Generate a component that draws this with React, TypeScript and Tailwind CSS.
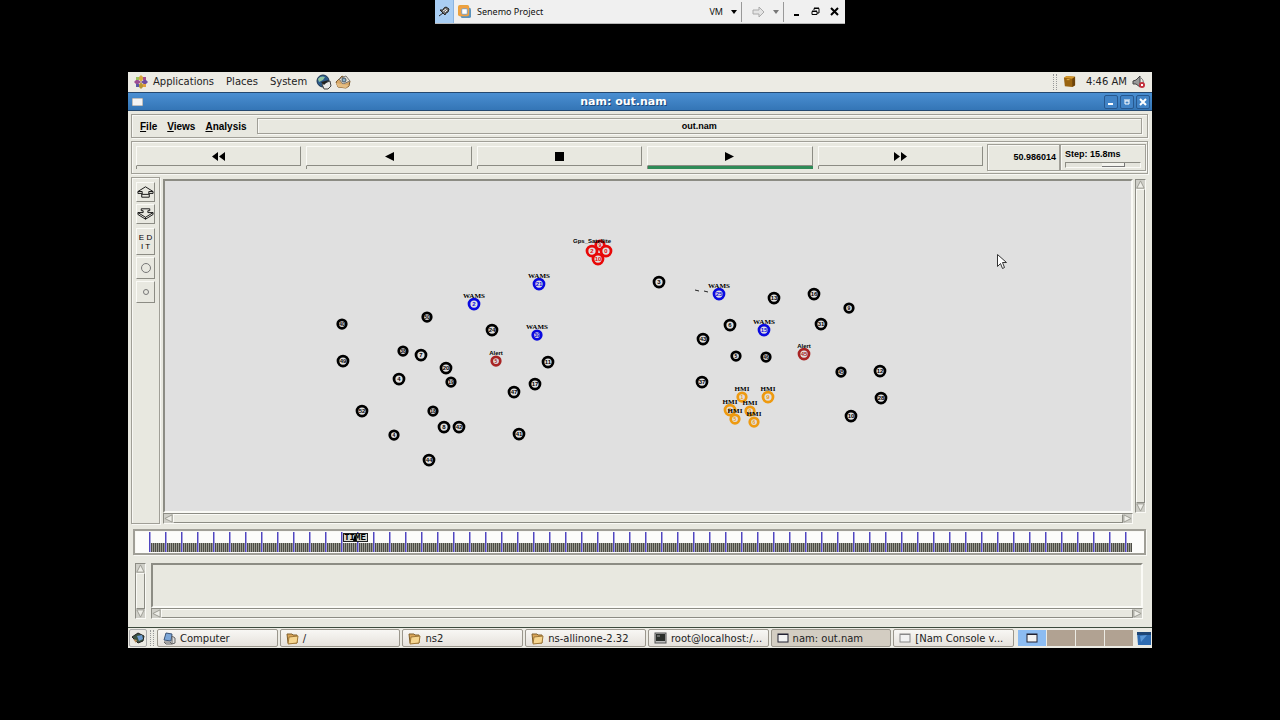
import type { ReactNode } from "react"
import { clsx } from "clsx"

// etched Tk frame and raised / sunken reliefs
const groove = "border border-[#a09f97] shadow-[inset_1px_1px_0_#f8f8f4,1px_1px_0_#f8f8f4]"
const raised = "border border-t-[#fafaf6] border-l-[#fafaf6] border-r-[#8c8c84] border-b-[#8c8c84]"
const sunken = "border border-t-[#8c8c84] border-l-[#8c8c84] border-r-[#fafaf6] border-b-[#fafaf6]"

type Kind = "router" | "wams" | "alert" | "hmi" | "sat"

interface NetNode {
  x: number
  y: number
  id: string
  kind?: Kind
  label?: string
  small?: boolean
}

const colors: Record<Kind, string> = {
  router: "#000000",
  wams: "#0a0ae0",
  alert: "#a82424",
  hmi: "#ee9a10",
  sat: "#e80808",
}

const nodes: NetNode[] = [
  { x: 342, y: 324, id: "40", small: true },
  { x: 427, y: 317, id: "50", small: true },
  { x: 492, y: 330, id: "24" },
  { x: 403, y: 351, id: "38", small: true },
  { x: 421, y: 355, id: "7" },
  { x: 343, y: 361, id: "49" },
  { x: 446, y: 368, id: "20" },
  { x: 399, y: 379, id: "4" },
  { x: 451, y: 382, id: "19", small: true },
  { x: 548, y: 362, id: "11" },
  { x: 535, y: 384, id: "17" },
  { x: 514, y: 392, id: "47" },
  { x: 362, y: 411, id: "52" },
  { x: 433, y: 411, id: "18", small: true },
  { x: 444, y: 427, id: "8" },
  { x: 459, y: 427, id: "42" },
  { x: 394, y: 435, id: "4", small: true },
  { x: 519, y: 434, id: "41" },
  { x: 429, y: 460, id: "44" },
  { x: 659, y: 282, id: "3" },
  { x: 774, y: 298, id: "13" },
  { x: 814, y: 294, id: "16" },
  { x: 849, y: 308, id: "9", small: true },
  { x: 821, y: 324, id: "31" },
  { x: 730, y: 325, id: "6" },
  { x: 703, y: 339, id: "43" },
  { x: 736, y: 356, id: "5", small: true },
  { x: 766, y: 357, id: "46", small: true },
  { x: 841, y: 372, id: "45", small: true },
  { x: 880, y: 371, id: "12" },
  { x: 702, y: 382, id: "37" },
  { x: 881, y: 398, id: "28" },
  { x: 851, y: 416, id: "10" },
  { x: 539, y: 284, id: "21", kind: "wams", label: "WAMS" },
  { x: 474, y: 304, id: "2", kind: "wams", label: "WAMS" },
  { x: 537, y: 335, id: "39", kind: "wams", label: "WAMS", small: true },
  { x: 719, y: 294, id: "25", kind: "wams", label: "WAMS" },
  { x: 764, y: 330, id: "15", kind: "wams", label: "WAMS" },
  { x: 496, y: 361, id: "5", kind: "alert", label: "Alert", small: true },
  { x: 804, y: 354, id: "45", kind: "alert", label: "Alert" },
  { x: 742, y: 397, id: "1", kind: "hmi", label: "HMI", small: true },
  { x: 768, y: 397, id: "9", kind: "hmi", label: "HMI" },
  { x: 730, y: 410, id: "3", kind: "hmi", label: "HMI" },
  { x: 750, y: 411, id: "0", kind: "hmi", label: "HMI", small: true },
  { x: 735, y: 419, id: "5", kind: "hmi", label: "HMI", small: true },
  { x: 754, y: 422, id: "6", kind: "hmi", label: "HMI", small: true },
  { x: 600, y: 245, id: "9", kind: "sat", small: true },
  { x: 592, y: 251, id: "2", kind: "sat" },
  { x: 606, y: 251, id: "0", kind: "sat" },
  { x: 598, y: 259, id: "10", kind: "sat" },
]

function Node({ x, y, id, kind = "router", label, small }: NetNode) {
  const color = colors[kind]
  return (
    <g>
      <circle cx={x} cy={y} r={small ? 4.25 : 5} fill="#e0e0e0" stroke={color} strokeWidth={2.75} />
      <text
        x={x}
        y={y + 2}
        textAnchor="middle"
        fill={color}
        className={clsx("font-bold", small ? "text-[5px]" : "text-[6px]")}
      >
        {id}
      </text>
      {label && (
        <text
          x={x}
          y={y - 6}
          textAnchor="middle"
          className={clsx(
            "font-bold",
            label === "Alert" ? "text-[6px]" : "font-['Liberation_Serif',serif] text-[7px]"
          )}
        >
          {label}
        </text>
      )}
    </g>
  )
}

function Topology() {
  return (
    <svg className="block h-full w-full font-['Liberation_Sans',sans-serif]">
      <g transform="translate(-165 -181)">
        {nodes.map((n) => (
          <Node key={`${n.x}-${n.y}`} {...n} />
        ))}
        <text x="592" y="243" textAnchor="middle" className="text-[6px] font-bold">
          Gps_Satellite
        </text>
        <path d="M695 290l4 1M704 291l4 1" stroke="#222" />
        <path d="M997.500 254.500v12l3-3 2 5 2-1-2-5h4z" fill="#fff" stroke="#333" />
      </g>
    </svg>
  )
}

function Arrow({ dir }: { dir: "up" | "down" | "left" | "right" }) {
  const points = { up: "5,1 9,9 1,9", down: "1,1 9,1 5,9", left: "1,5 9,1 9,9", right: "1,1 9,5 1,9" }
  return (
    <svg viewBox="0 0 10 10" className="size-[9px] shrink-0 bg-[#cfcfc8]">
      <polygon points={points[dir]} fill="#eeeee8" stroke="#97978f" />
    </svg>
  )
}

function ScrollBar({ vertical }: { vertical?: boolean }) {
  return (
    <div
      className={clsx(
        "flex shrink-0 items-center bg-[#d8d8d0]",
        sunken,
        vertical ? "w-[11px] flex-col" : "h-[11px]"
      )}
    >
      <Arrow dir={vertical ? "up" : "left"} />
      <div className={clsx("flex-1 bg-[#e8e8e0]", raised, vertical ? "w-full" : "h-full")} />
      <Arrow dir={vertical ? "down" : "right"} />
    </div>
  )
}

function HostBar() {
  return (
    <header className="flex h-6 w-[410px] items-center border-b border-[#b8b8b8] bg-[#f0f0f0] font-['Noto_Sans',sans-serif] text-[9px] text-[#111]">
      <button aria-label="Pin" className="flex h-full w-[19px] items-center justify-center border-r border-[#8bb4e0] bg-[#a9cef4]">
        <svg viewBox="0 0 12 12" className="size-3">
          <path d="M1 10l4-3" stroke="#222" />
          <path d="M2 4l5 5 1-2 2-1 1-3-3-2-2 1-1 2z" fill="#777" stroke="#222" />
          <path d="M5 5l3-2M7 6l2-2" stroke="#eee" />
        </svg>
      </button>
      <svg viewBox="0 0 14 14" className="ml-1 size-[13px]">
        <rect x="0" y="0" width="12" height="12" rx="2" fill="#e9a33b" />
        <rect x="3" y="3" width="11" height="11" rx="2" fill="#5b93bd" />
        <rect x="1" y="1" width="11" height="11" rx="2" fill="#f0a040" />
        <rect x="4" y="4" width="6" height="6" rx="1" fill="#fff" stroke="#7a9cb8" />
      </svg>
      <span className="ml-1.5 flex-1">Senemo Project</span>
      <button className="flex items-center gap-2 pr-1">
        VM
        <svg viewBox="0 0 6 4" className="h-1 w-1.5">
          <path d="M0 0h6L3 4z" />
        </svg>
      </button>
      <button aria-label="Send keys" className="flex h-5 items-center gap-2 border-x border-[#999] pr-1 pl-2.5">
        <svg viewBox="0 0 13 12" className="h-3 w-[13px]">
          <path d="M1 4h6V1l5 5-5 5V8H1z" fill="#e4e4e4" stroke="#aaa" />
        </svg>
        <svg viewBox="0 0 6 4" className="h-1 w-1.5" fill="#777">
          <path d="M0 0h6L3 4z" />
        </svg>
      </button>
      <div className="flex items-center gap-2.5 pr-1.5 pl-2">
        <button aria-label="Minimize">
          <svg viewBox="0 0 9 9" className="size-[9px]">
            <path d="M2 7h5v2H2z" />
          </svg>
        </button>
        <button aria-label="Restore">
          <svg viewBox="0 0 9 9" className="size-[9px]" fill="none" stroke="#000">
            <path d="M3 3V1.500h5V6H6M3 1h5" />
            <path d="M1 4.500h5v3H1zM1 4h5" />
          </svg>
        </button>
        <button aria-label="Close">
          <svg viewBox="0 0 9 9" className="size-[9px]" stroke="#000" strokeWidth="2">
            <path d="M1 1l7 7M8 1L1 8" />
          </svg>
        </button>
      </div>
    </header>
  )
}

function GnomePanel() {
  return (
    <nav className="flex h-5 shrink-0 items-center bg-[#ecebe4] px-1.5 pb-px text-[10px] text-[#222]">
      <svg viewBox="0 0 14 14" className="size-[14px]">
        <path d="M7 0l3 3-3 4-3-4z" fill="#d8a83a" />
        <path d="M14 7l-3 3-4-3 4-3z" fill="#6d4a9e" />
        <path d="M7 14l-3-3 3-4 3 4z" fill="#b99632" />
        <path d="M0 7l3-3 4 3-4 3z" fill="#9a4c94" />
        <path d="M2 2h3v3H2z" fill="#9bc05c" />
        <path d="M9 2h3v3H9z" fill="#a34d90" />
        <path d="M2 9h3v3H2z" fill="#5a58a6" />
        <path d="M9 9h3v3H9z" fill="#e0a040" />
      </svg>
      <button className="ml-[5px]">Applications</button>
      <button className="ml-3">Places</button>
      <button className="ml-3">System</button>
      <button aria-label="Web Browser" className="ml-[9px]">
        <svg viewBox="0 0 16 16" className="size-4">
          <circle cx="7" cy="7" r="6" fill="#2c5b8c" stroke="#1b344f" />
          <path d="M2 5c2-3 5-3 7-2L7 6 3 8z" fill="#8fc3a0" />
          <path d="M6 10l8-3 1 5-3 3H8z" fill="#e8e8e8" stroke="#444" />
          <path d="M5 8l8-2-5 5z" fill="#222" />
        </svg>
      </button>
      <button aria-label="Mail" className="ml-[3px]">
        <svg viewBox="0 0 16 16" className="size-4">
          <path d="M1 8l6-6 8 5-1 5-3 2-8-1z" fill="#d7a765" stroke="#7d5a2c" />
          <path d="M4 5l7-3 4 5-7 3z" fill="#e8e0d0" stroke="#777" />
          <circle cx="9" cy="6" r="2" fill="#8fb5ca" stroke="#456" />
          <path d="M1 9l5 1 8 1-3 3-8-1z" fill="#e5bd82" />
        </svg>
      </button>
      <div className="ml-auto h-4 w-1 border-x border-dotted border-[#999]" />
      <svg viewBox="0 0 14 14" className="ml-1.5 size-[13px]">
        <path d="M1 3l3-2 9 1v9l-3 2-8-1z" fill="#9a6410" />
        <path d="M1 3l3-2 9 1-3 2z" fill="#d79a2c" />
        <path d="M10 4l3-2v9l-3 2z" fill="#6d430a" />
        <path d="M4 5h3" stroke="#e8b850" />
      </svg>
      <time className="ml-2.5">4:46 AM</time>
      <svg viewBox="0 0 14 14" className="ml-[5px] size-[14px]">
        <path d="M1 6l3-1 4-4v11L4 9 1 9z" fill="#999" stroke="#444" />
        <path d="M9 3c3 2 3 6 0 8" fill="none" stroke="#777" />
        <circle cx="10" cy="10" r="3" fill="#c4303c" />
        <path d="M9 9l2 2M11 9l-2 2" stroke="#fff" />
      </svg>
    </nav>
  )
}

function TitleButton({ label, children }: { label: string; children: ReactNode }) {
  return (
    <button
      aria-label={label}
      className="flex size-[14px] items-center justify-center rounded-xs border border-[#27588f] bg-[#4183c6]"
    >
      <svg viewBox="0 0 8 8" className="size-2" fill="none" stroke="#fff" strokeWidth="2">
        {children}
      </svg>
    </button>
  )
}

function TitleBar() {
  return (
    <div className="flex h-[19px] shrink-0 items-center border-y border-[#24486f] bg-linear-to-b from-[#4a8fd2] to-[#3475b6] pr-0.5 pl-1">
      <svg viewBox="0 0 11 8" className="h-2 w-[11px]">
        <rect x="0" y="0" width="11" height="8" fill="#f4f4f4" stroke="#8a8a8a" />
      </svg>
      <h1 className="flex-1 pt-px text-center text-[11px] font-bold text-white [text-shadow:1px_1px_0_#1f4a7a]">
        nam: out.nam
      </h1>
      <div className="flex gap-0.5">
        <TitleButton label="Minimize">
          <path d="M1 6h5" />
        </TitleButton>
        <TitleButton label="Maximize">
          <path d="M2 3h4v3H2z" strokeWidth="1" />
          <path d="M1 2h6" strokeWidth="1" />
        </TitleButton>
        <TitleButton label="Close">
          <path d="M1 1l6 6M7 1L1 7" />
        </TitleButton>
      </div>
    </div>
  )
}

function MenuBar() {
  return (
    <div className={clsx("flex h-6 shrink-0 items-center pr-[5px] pl-2 text-[10px] font-bold", groove)}>
      {["File", "Views", "Analysis"].map((item) => (
        <button key={item} className="mr-2.5 first-letter:underline">
          {item}
        </button>
      ))}
      <div className={clsx("flex h-4 flex-1 items-center justify-center pt-px text-[9px]", groove)}>out.nam</div>
    </div>
  )
}

const transport = [
  { name: "Rewind", d: "M7 0v9L1 4.500zM14 0v9L8 4.500z" },
  { name: "Play backward", d: "M12 0v9L3 4.500z" },
  { name: "Stop", d: "M3 0h9v9H3z" },
  { name: "Play", d: "M3 0v9l9-4.500z", active: true },
  { name: "Fast forward", d: "M1 0v9l6-4.500zM8 0v9l6-4.500z" },
]

function Toolbar() {
  return (
    <div className={clsx("mt-[3px] flex h-[33px] shrink-0 text-[9px] font-bold", groove)}>
      <div className="flex flex-1 gap-[5px] px-1 pt-1">
        {transport.map((t) => (
          <div key={t.name} className="flex-1">
            <button
              aria-label={t.name}
              className={clsx("flex h-5 w-full items-center justify-center", raised)}
            >
              <svg viewBox="0 0 15 9" className="h-[9px] w-[15px]">
                <path d={t.d} />
              </svg>
            </button>
            <div className={clsx("h-[3px] border-l border-[#8c8c84]", t.active && "bg-[#2e8b57]")} />
          </div>
        ))}
      </div>
      <output className={clsx("my-0.5 flex w-[73px] items-center justify-end pr-[3px]", groove)}>50.986014</output>
      <div className={clsx("my-0.5 mr-px w-[86px] px-1 pt-0.5", groove)}>
        <label htmlFor="step" className="block leading-[15px]">
          Step: 15.8ms
        </label>
        <input
          id="step"
          type="range"
          min="0"
          max="100"
          defaultValue="71"
          className={clsx(
            "block h-1.5 w-full appearance-none bg-[#e4e4dc] [&::-webkit-slider-thumb]:h-1 [&::-webkit-slider-thumb]:w-[23px] [&::-webkit-slider-thumb]:appearance-none [&::-webkit-slider-thumb]:border-r [&::-webkit-slider-thumb]:border-b [&::-webkit-slider-thumb]:border-[#777] [&::-webkit-slider-thumb]:bg-[#f4f4ee]",
            sunken
          )}
        />
      </div>
    </div>
  )
}

function SideButton({ label, className, children }: { label: string; className: string; children: ReactNode }) {
  return (
    <button aria-label={label} className={clsx("flex w-[19px] items-center justify-center", raised, className)}>
      {children}
    </button>
  )
}

function SideTools() {
  return (
    <aside className={clsx("flex w-[29px] shrink-0 flex-col items-center gap-0.5 pt-1", groove)}>
      <SideButton label="Zoom in" className="h-5">
        <svg viewBox="0 0 18 14" className="h-[14px] w-[18px]" fill="none" stroke="#111">
          <path d="M9 1.500L1 6.500v2h4v4h8v-4h4v-2zM1 6.500h4.500v3h7v-3H17" />
        </svg>
      </SideButton>
      <SideButton label="Zoom out" className="h-5">
        <svg viewBox="0 0 18 14" className="h-[14px] w-[18px]" fill="none" stroke="#111">
          <path d="M4.500 1.500h9v2h-2v2H17L9 10.500 1 5.500h5.500v-2h-2zM1 5.500v2l8 5 8-5v-2M9 10.500v2" />
        </svg>
      </SideButton>
      <SideButton label="Edit" className="mt-0.5 h-[27px] flex-col text-[8px] leading-[9px]">
        <span>E D</span>
        <span>I T</span>
      </SideButton>
      <SideButton label="Bigger nodes" className="h-[22px]">
        <svg viewBox="0 0 12 12" className="size-3">
          <circle cx="6" cy="6" r="4.500" fill="none" stroke="#777" />
        </svg>
      </SideButton>
      <SideButton label="Smaller nodes" className="h-[22px]">
        <svg viewBox="0 0 12 12" className="size-3">
          <circle cx="6" cy="6" r="2.500" fill="none" stroke="#777" />
        </svg>
      </SideButton>
    </aside>
  )
}

function Timeline() {
  return (
    <div className={clsx("mx-0.5 mt-[5px] h-[26px] shrink-0 border-2! bg-[#fcfcfa] pr-3 pl-3.5", groove)}>
      <svg className="block h-full w-full">
        <defs>
          <pattern id="minor" width="2" height="22" patternUnits="userSpaceOnUse">
            <path d="M0 0h1v22H0z" fill="#4c4c46" />
            <path d="M1 0h1v22H1z" fill="#9c9c92" />
          </pattern>
          <pattern id="major" width="16" height="22" patternUnits="userSpaceOnUse">
            <path d="M0 1h1v21H0z" fill="#5046c0" />
            <path d="M1 1h1v21H1z" fill="#a8a2e0" />
          </pattern>
        </defs>
        <rect y="12" width="100%" height="9" fill="url(#minor)" />
        <rect width="100%" height="21" fill="url(#major)" />
        <rect x="194.500" y="2.500" width="24" height="8" fill="#d8d8ce" stroke="#222" />
        <text x="206" y="9" textAnchor="middle" className="font-['Liberation_Mono',monospace] text-[9px] font-bold">
          TIME
        </text>
        <path d="M206 3l1 3 1 4h-4l1-4z" />
      </svg>
    </div>
  )
}

const FolderIcon = () => (
  <svg viewBox="0 0 13 13" className="size-[13px] shrink-0">
    <path d="M1 2h5l1 1h4v8H2z" fill="#d9a558" stroke="#80602c" />
    <path d="M3 5l9-1-1 7-9 1z" fill="#f6d690" stroke="#a07838" />
  </svg>
)

const WindowIcon = ({ faded }: { faded?: boolean }) => (
  <svg viewBox="0 0 12 12" className="size-3 shrink-0">
    <rect x="1" y="2" width="10" height="8" fill="#f2f2f2" stroke={faded ? "#888" : "#223"} />
    <path d="M1 2.500h10" stroke={faded ? "#888" : "#223"} />
  </svg>
)

const ComputerIcon = () => (
  <svg viewBox="0 0 13 13" className="size-[13px] shrink-0">
    <path d="M3 1l6 1-1 7-7-1z" fill="#7da7d8" stroke="#3c5476" />
    <path d="M9 4l3 2v5l-3 1zM1 10l6 0 2 2-6 0z" fill="#ddd" stroke="#666" />
  </svg>
)

const TerminalIcon = () => (
  <svg viewBox="0 0 13 13" className="size-[13px] shrink-0">
    <rect x="1" y="1" width="11" height="10" fill="#bbb" stroke="#555" />
    <rect x="2" y="2" width="9" height="7" fill="#2b2f2b" />
    <path d="M3 4h3" stroke="#aaa" />
  </svg>
)

const tasks = [
  { title: "Computer", icon: <ComputerIcon /> },
  { title: "/", icon: <FolderIcon /> },
  { title: "ns2", icon: <FolderIcon /> },
  { title: "ns-allinone-2.32", icon: <FolderIcon /> },
  { title: "root@localhost:/...", icon: <TerminalIcon /> },
  { title: "nam: out.nam", icon: <WindowIcon />, active: true },
  { title: "[Nam Console v...", icon: <WindowIcon faded /> },
]

function TaskBar() {
  return (
    <footer className="flex h-[21px] shrink-0 items-center gap-0.5 border-t border-[#3c4a3c] bg-[#ecebe4] px-px text-[10px] text-[#222]">
      <button aria-label="Show desktop" className="flex size-[18px] items-center justify-center rounded-xs border border-[#aaa]">
        <svg viewBox="0 0 14 14" className="size-[14px]">
          <path d="M1 6l6-4 6 3-1 5-5 2z" fill="#3c5440" stroke="#222" />
          <path d="M6 5l5-1 1 4-4 2z" fill="#6a9ad0" />
          <path d="M2 8l4 1-1 3z" fill="#b48a58" />
        </svg>
      </button>
      <div className="mx-px h-4 w-1 border-x border-dotted border-[#999]" />
      {tasks.map((t) => (
        <button
          key={t.title}
          className={clsx(
            "flex h-[18px] min-w-0 flex-1 items-center gap-1 rounded-xs border border-[#9a968c] pl-[5px] whitespace-nowrap",
            t.active ? "bg-[#d3cdc2]" : "bg-linear-to-b from-[#f8f7f4] to-[#e6e2dc]"
          )}
        >
          {t.icon}
          <span className="pt-px">{t.title}</span>
        </button>
      ))}
      <div className="ml-0.5 flex h-4 gap-px">
        <button aria-label="Workspace 1" className="flex w-7 items-center justify-center bg-[#8cbcf2]">
          <WindowIcon />
        </button>
        <button aria-label="Workspace 2" className="w-7 bg-[#b1a292]" />
        <button aria-label="Workspace 3" className="w-7 bg-[#b1a292]" />
        <button aria-label="Workspace 4" className="w-7 bg-[#b1a292]" />
      </div>
      <button aria-label="Trash" className="ml-0.5">
        <svg viewBox="0 0 14 15" className="h-[15px] w-[14px]">
          <path d="M0 1h14v13H1z" fill="#2f6cb2" />
          <path d="M0 1h14v3H0z" fill="#1f4676" />
          <path d="M3 5l7-1-6 7z" fill="#5b97d6" />
        </svg>
      </button>
    </footer>
  )
}

export default function App() {
  return (
    <div className="flex h-screen flex-col items-center bg-black">
      <HostBar />
      <div className="mt-12 mb-[72px] flex min-h-0 w-4/5 flex-1 flex-col bg-[#e8e8e0] font-['DejaVu_Sans',sans-serif]">
        <GnomePanel />
        <TitleBar />
        <main className="flex min-h-0 flex-1 flex-col pt-[3px] pr-1 pb-2 pl-[3px] font-['Liberation_Sans',sans-serif] text-black">
          <MenuBar />
          <Toolbar />
          <div className="mt-[3px] flex min-h-0 flex-1">
            <SideTools />
            <div className="ml-[3px] flex min-w-0 flex-1 flex-col pt-0.5">
              <div className={clsx("min-h-0 flex-1 border-2! bg-[#e0e0e0]", sunken)}>
                <Topology />
              </div>
              <ScrollBar />
            </div>
            <div className="mt-0.5 mr-0.5 mb-[11px] ml-0.5 flex">
              <ScrollBar vertical />
            </div>
          </div>
          <Timeline />
          <div className="mt-2 flex h-[56px] shrink-0 pr-[5px] pl-1">
            <ScrollBar vertical />
            <div className="ml-[5px] flex flex-1 flex-col">
              <div className={clsx("flex-1 border-2!", sunken)} />
              <ScrollBar />
            </div>
          </div>
        </main>
        <TaskBar />
      </div>
    </div>
  )
}
